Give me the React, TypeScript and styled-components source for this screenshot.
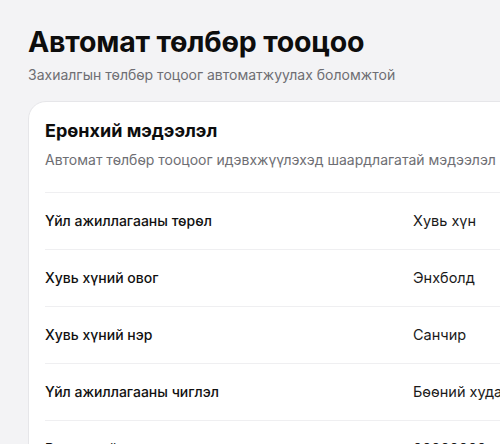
import React from "react";
import styled, { createGlobalStyle } from "styled-components";

const Global = createGlobalStyle`
  html, body { margin: 0; padding: 0; overflow: hidden; background: #f3f3f5; }
  body { font-family: Inter, "Noto Sans", "Liberation Sans", sans-serif; color: #111; }
  * { box-sizing: border-box; }
`;

const Page = styled.main`
  width: 760px;
  padding: 24px 0 0 28px;
`;

const Title = styled.h1`
  margin: 0;
  font-size: 28.5px;
  line-height: 36px;
  font-weight: 700;
  letter-spacing: -0.2px;
  color: #0d0d0d;
`;

const Subtitle = styled.p`
  margin: 5px 0 0;
  font-size: 14px;
  line-height: 20px;
  color: #6e6e73;
`;

const Card = styled.section`
  margin-top: 16px;
  width: 700px;
  background: #fff;
  border: 1px solid #e6e6e9;
  border-radius: 18px;
  padding: 16px 0 0 16px;
`;

const CardHead = styled.header`
  padding-bottom: 22px;
  border-bottom: 1px solid #efeff1;
`;

const CardTitle = styled.h2`
  margin: 0;
  font-size: 18px;
  line-height: 26px;
  font-weight: 700;
  color: #0d0d0d;
`;

const CardSub = styled.p`
  margin: 6px 0 0;
  font-size: 14px;
  line-height: 20px;
  color: #6e6e73;
`;

const Row = styled.div`
  display: grid;
  grid-template-columns: 368px 1fr;
  align-items: center;
  height: 57px;
  border-bottom: 1px solid #efeff1;
  font-size: 14px;
  line-height: 20px;
`;

const Label = styled.span`
  font-weight: 500;
  color: #111;
`;

const Value = styled.span`
  font-weight: 400;
  font-size: 14.5px;
  color: #1a1a1a;
  white-space: nowrap;
`;

const rows: [string, string][] = [
  ["Үйл ажиллагааны төрөл", "Хувь хүн"],
  ["Хувь хүний овог", "Энхболд"],
  ["Хувь хүний нэр", "Санчир"],
  ["Үйл ажиллагааны чиглэл", "Бөөний худалдаа"],
  ["Регистрийн дугаар", "00000000"],
];

export default function App() {
  return (
    <>
      <Global />
      <Page>
        <Title>Автомат төлбөр тооцоо</Title>
        <Subtitle>Захиалгын төлбөр тоцоог автоматжуулах боломжтой</Subtitle>
        <Card>
          <CardHead>
            <CardTitle>Ерөнхий мэдээлэл</CardTitle>
            <CardSub>Автомат төлбөр тооцоог идэвхжүүлэхэд шаардлагатай мэдээлэл</CardSub>
          </CardHead>
          {rows.map(([l, v]) => (
            <Row key={l}>
              <Label>{l}</Label>
              <Value>{v}</Value>
            </Row>
          ))}
        </Card>
      </Page>
    </>
  );
}
